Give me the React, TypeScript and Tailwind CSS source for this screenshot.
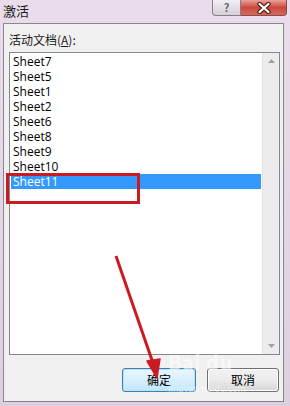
const SHEETS = ["Sheet7", "Sheet5", "Sheet1", "Sheet2", "Sheet6", "Sheet8", "Sheet9", "Sheet10", "Sheet11"];
const SELECTED = "Sheet11";

const font = { fontFamily: '"Noto Sans CJK SC", "Liberation Sans", sans-serif' };
const listFont = { fontFamily: '"Open Sans", "Noto Sans CJK SC", sans-serif' };

function TitleButtons() {
  return (
    <div className="flex mr-[3px]">
      <div className="w-[29px] h-[16px] rounded-bl-[4px] border border-[#8a7b8c] border-t-0 bg-gradient-to-b from-[#f2eef3] to-[#d5cdd8] flex items-center justify-center text-[11px] leading-none font-bold text-[#6b6470]">
        ?
      </div>
      <div className="w-[46px] h-[16px] rounded-br-[4px] border border-[#8a4a4a] border-t-0 border-l-0 bg-gradient-to-b from-[#e8a19a] via-[#c9473c] to-[#d66a5c] flex items-center justify-center">
        <svg width="16" height="12" viewBox="0 0 16 12">
          <path d="M3.5 2 L12.5 10 M12.5 2 L3.5 10" stroke="#5a2020" strokeWidth="4.5" strokeLinecap="round" />
          <path d="M3.5 2 L12.5 10 M12.5 2 L3.5 10" stroke="#ffffff" strokeWidth="2.2" strokeLinecap="round" />
        </svg>
      </div>
    </div>
  );
}

export default function App() {
  return (
    <div className="relative w-[290px] h-[406px] overflow-hidden bg-gradient-to-b from-[#eadcea] to-[#dccfe0] flex flex-col" style={font}>
      {/* title bar */}
      <div className="h-[23px] flex items-start justify-between">
        <span className="pl-[3px] pt-[3px] text-[13px] leading-[15px] text-[#1a1a1a]">激活</span>
        <TitleButtons />
      </div>

      {/* client area */}
      <div className="ml-[3px] mr-[6px] h-[379px] border border-[#8d8492] bg-[#f0f0f0] flex flex-col pl-[5px] pr-[3px]">
        <div className="pt-[8px] h-[28px] text-[12px] leading-[15px] text-[#1a1a1a]">
          活动文档(<span className="underline">A</span>):
        </div>

        {/* listbox */}
        <div className="h-[303px] border border-[#828790] bg-white flex">
          <div className="flex-1 pt-[1px] px-[1px] flex flex-col" style={listFont}>
            {SHEETS.map((s) => (
              <div
                key={s}
                className={
                  s === SELECTED
                    ? "h-[15px] pl-[2px] text-[12px] leading-[15px] bg-[#3399ff] text-white"
                    : "h-[15px] pl-[2px] text-[12px] leading-[15px] text-black"
                }
              >
                {s}
              </div>
            ))}
          </div>
          <div className="w-[17px] bg-[#ececec] border-l border-[#e2e2e2] flex flex-col justify-between items-center py-[6px]">
            <svg width="7" height="4" viewBox="0 0 7 4">
              <path d="M0 4 L3.5 0 L7 4 Z" fill="#a0a0a0" />
            </svg>
            <svg width="7" height="4" viewBox="0 0 7 4">
              <path d="M0 0 L3.5 4 L7 0 Z" fill="#a0a0a0" />
            </svg>
          </div>
        </div>

        {/* buttons */}
        <div className="mt-[13px] flex justify-end gap-[11px] pr-[1px]">
          <button className="w-[74px] h-[24px] rounded-[3px] border border-[#3c7fb1] bg-gradient-to-b from-[#eaf6fd] via-[#d9f0fc] to-[#bee6fd] shadow-[inset_0_0_0_1px_#b8e0f7] text-[12px] leading-none text-black">
            确定
          </button>
          <button className="w-[72px] h-[24px] rounded-[3px] border border-[#707070] bg-gradient-to-b from-[#f2f2f2] via-[#ebebeb] to-[#d5d5d5] shadow-[inset_0_0_0_1px_#fcfcfc] text-[12px] leading-none text-black">
            取消
          </button>
        </div>
      </div>

      {/* baidu watermark */}
      <div className="absolute left-[168px] top-[352px] text-[20px] font-bold leading-none text-white/60 tracking-wide">
        Bai du
      </div>
      <div className="absolute left-[168px] top-[384px] text-[9px] leading-none text-white/50">jingyan.baidu.com</div>

      {/* annotations */}
      <div className="absolute left-[6px] top-[173px] w-[134px] h-[31px] border-[3px] border-[#cc1a22]" />
      <svg className="absolute left-0 top-0" width="290" height="406" viewBox="0 0 290 406">
        <path d="M116 256 L154 366" stroke="#cc1a22" strokeWidth="3" fill="none" />
        <path d="M147 361 L157 378 L160 359 Z" fill="#cc1a22" stroke="#cc1a22" strokeWidth="1.5" strokeLinejoin="round" />
      </svg>
    </div>
  );
}
